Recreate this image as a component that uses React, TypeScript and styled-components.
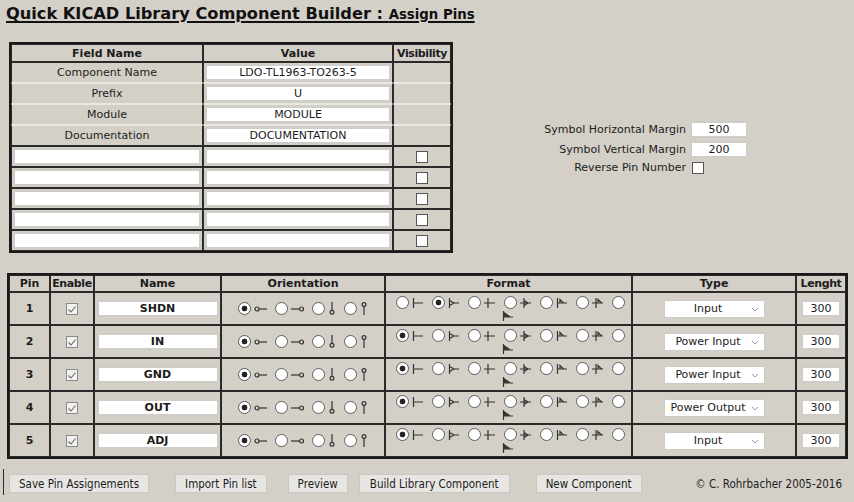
import React from 'react';
import styled, { createGlobalStyle } from 'styled-components';

const GlobalStyle = createGlobalStyle`
  html, body {
    margin: 0;
    padding: 0;
    background: #d4d0c8;
  }
  body {
    font-family: 'DejaVu Sans', Verdana, sans-serif;
    font-size: 11px;
    color: #1c1c1c;
  }
`;

const fields = [
  { name: 'Component Name', value: 'LDO-TL1963-TO263-5' },
  { name: 'Prefix', value: 'U' },
  { name: 'Module', value: 'MODULE' },
  { name: 'Documentation', value: 'DOCUMENTATION' },
];

const pins = [
  { pin: 1, name: 'SHDN', format: 1, type: 'Input' },
  { pin: 2, name: 'IN', format: 0, type: 'Power Input' },
  { pin: 3, name: 'GND', format: 0, type: 'Power Input' },
  { pin: 4, name: 'OUT', format: 0, type: 'Power Output' },
  { pin: 5, name: 'ADJ', format: 0, type: 'Input' },
];

const pinTypes = [
  'Input',
  'Output',
  'Bidirectional',
  'Tri-state',
  'Passive',
  'Unspecified',
  'Power Input',
  'Power Output',
  'Open Collector',
  'Open Emitter',
  'Not Connected',
];

const orientations = ['left', 'right', 'down', 'up'] as const;
const formats = ['line', 'clock', 'inverted', 'invclock', 'low', 'invlow'] as const;

type GlyphKind =
  | (typeof orientations)[number]
  | (typeof formats)[number]
  | 'flag';

// little pin drawings next to the radio buttons
const Glyph = ({ kind }: { kind: GlyphKind }) => {
  const s = { stroke: '#333', strokeWidth: 1.2, fill: 'none' };
  switch (kind) {
    case 'left':
      return (
        <svg width="13" height="12" viewBox="0 0 13 12">
          <circle cx="3" cy="6" r="2" {...s} />
          <path d="M5 6H13" {...s} />
        </svg>
      );
    case 'right':
      return (
        <svg width="13" height="12" viewBox="0 0 13 12">
          <path d="M0 6H8.5" {...s} />
          <circle cx="10.5" cy="6" r="2" {...s} />
        </svg>
      );
    case 'down':
      return (
        <svg width="8" height="13" viewBox="0 0 8 13">
          <path d="M4 0V8.3" {...s} />
          <circle cx="4" cy="10.3" r="1.9" {...s} />
        </svg>
      );
    case 'up':
      return (
        <svg width="8" height="13" viewBox="0 0 8 13">
          <circle cx="4" cy="2.5" r="1.9" {...s} />
          <path d="M4 4.5V13" {...s} />
        </svg>
      );
    case 'line':
      return (
        <svg width="11" height="12" viewBox="0 0 11 12">
          <path d="M1.5 1V11M1.5 6H11" {...s} />
        </svg>
      );
    case 'clock':
      return (
        <svg width="11" height="12" viewBox="0 0 11 12">
          <path d="M1.5 1V11M1.5 3.5L6 6L1.5 8.5M6 6H11" {...s} />
        </svg>
      );
    case 'inverted':
      return (
        <svg width="11" height="12" viewBox="0 0 11 12">
          <path d="M4 1V11M0 6H11" {...s} />
        </svg>
      );
    case 'invclock':
      return (
        <svg width="11" height="12" viewBox="0 0 11 12">
          <path d="M4 1V11M0 6H11M4 3.5L8 6L4 8.5" {...s} />
        </svg>
      );
    case 'low':
      return (
        <svg width="11" height="12" viewBox="0 0 11 12">
          <path d="M1.5 1V11M1.5 6H11M4 6V2.5L7.5 6" {...s} />
        </svg>
      );
    case 'invlow':
      return (
        <svg width="11" height="12" viewBox="0 0 11 12">
          <path d="M4 1V11M0 6H11M6 6V2.5L9.5 6" {...s} />
        </svg>
      );
    default:
      return (
        <svg width="11" height="10" viewBox="0 0 11 10">
          <path d="M1.5 0V10M1.5 6H11" {...s} />
          <path d="M1.5 1L8 5.5H1.5Z" fill="#333" stroke="#333" strokeWidth={0.8} />
        </svg>
      );
  }
};

const App = () => {
  return (
    <>
      <GlobalStyle />
      <Page>
        <Title>
          <TitleMain>Quick KICAD Library Component Builder : </TitleMain>
          <SubTitle>Assign Pins</SubTitle>
        </Title>

        <TopSection>
          <FieldTable>
            <colgroup>
              <col style={{ width: 192 }} />
              <col style={{ width: 190 }} />
              <col style={{ width: 58 }} />
            </colgroup>
            <thead>
              <HeadRow $h={18}>
                <HeadCell>Field Name</HeadCell>
                <HeadCell>Value</HeadCell>
                <HeadCell $tight>Visibility</HeadCell>
              </HeadRow>
            </thead>
            <tbody>
              {fields.map((f, i) => (
                <FieldRow key={f.name}>
                  <Cell $softTop={i > 0} $softBottom={i < fields.length - 1}>
                    {f.name}
                  </Cell>
                  <Cell $softTop={i > 0} $softBottom={i < fields.length - 1}>
                    <TextBox defaultValue={f.value} />
                  </Cell>
                  <Cell $softTop={i > 0} $softBottom={i < fields.length - 1} />
                </FieldRow>
              ))}
              {[0, 1, 2, 3, 4].map((i) => (
                <FieldRow key={i}>
                  <Cell>
                    <TextBox />
                  </Cell>
                  <Cell>
                    <TextBox />
                  </Cell>
                  <Cell>
                    <Check />
                  </Cell>
                </FieldRow>
              ))}
            </tbody>
          </FieldTable>

          <MarginPanel>
            <Label>Symbol Horizontal Margin</Label>
            <SmallBox defaultValue="500" />
            <Label>Symbol Vertical Margin</Label>
            <SmallBox defaultValue="200" />
            <Label>Reverse Pin Number</Label>
            <Check $inline />
          </MarginPanel>
        </TopSection>

        <PinTable>
          <colgroup>
            <col style={{ width: 41 }} />
            <col style={{ width: 44 }} />
            <col style={{ width: 127 }} />
            <col style={{ width: 164 }} />
            <col style={{ width: 247 }} />
            <col style={{ width: 164 }} />
            <col style={{ width: 50 }} />
          </colgroup>
          <thead>
            <HeadRow $h={17}>
              <HeadCell>Pin</HeadCell>
              <HeadCell $tight>Enable</HeadCell>
              <HeadCell>Name</HeadCell>
              <HeadCell>Orientation</HeadCell>
              <HeadCell>Format</HeadCell>
              <HeadCell>Type</HeadCell>
              <HeadCell $tight>Lenght</HeadCell>
            </HeadRow>
          </thead>
          <tbody>
            {pins.map((p) => (
              <PinRow key={p.pin}>
                <PinNumber>{p.pin}</PinNumber>
                <Cell>
                  <EnableBox>
                    <svg width="10" height="9" viewBox="0 0 10 9">
                      <path d="M1.5 4.5L4 7L8.5 1.5" stroke="#666" strokeWidth="1.1" fill="none" />
                    </svg>
                  </EnableBox>
                </Cell>
                <Cell>
                  <NameBox defaultValue={p.name} />
                </Cell>
                <Cell>
                  <Options $gap={8}>
                    {orientations.map((o, i) => (
                      <Option key={o}>
                        <Radio name={`orient-${p.pin}`} defaultChecked={i === 0} />
                        <Glyph kind={o} />
                      </Option>
                    ))}
                  </Options>
                </Cell>
                <Cell>
                  <FormatBlock>
                    <Options $gap={9}>
                      {formats.map((f, i) => (
                        <Option key={f}>
                          <Radio name={`format-${p.pin}`} defaultChecked={i === p.format} />
                          <Glyph kind={f} />
                        </Option>
                      ))}
                      <Radio name={`format-${p.pin}`} />
                    </Options>
                    <FlagLine>
                      <Glyph kind="flag" />
                    </FlagLine>
                  </FormatBlock>
                </Cell>
                <Cell>
                  <SelectWrap>
                    <TypeSelect defaultValue={p.type}>
                      {pinTypes.map((t) => (
                        <option key={t}>{t}</option>
                      ))}
                    </TypeSelect>
                    <Chevron>
                      <svg width="8" height="5" viewBox="0 0 8 5">
                        <path d="M1 1L4 4L7 1" stroke="#9a9a9a" strokeWidth="1" fill="none" />
                      </svg>
                    </Chevron>
                  </SelectWrap>
                </Cell>
                <Cell>
                  <LengthBox defaultValue="300" />
                </Cell>
              </PinRow>
            ))}
          </tbody>
        </PinTable>

        <Footer>
          <ActionButton $ml={5}>Save Pin Assignements</ActionButton>
          <ActionButton $ml={26}>Import Pin list</ActionButton>
          <ActionButton $ml={21}>Preview</ActionButton>
          <ActionButton $ml={11} $px={10}>Build Library Component</ActionButton>
          <ActionButton $ml={26}>New Component</ActionButton>
          <Copyright>© C. Rohrbacher 2005-2016</Copyright>
        </Footer>
      </Page>
    </>
  );
};

export default App;

const Page = styled.div`
  width: 854px;
  height: 502px;
  overflow: hidden;
  display: flex;
  flex-direction: column;
`;

const Title = styled.h1`
  display: flex;
  align-items: baseline;
  margin: 0;
  padding: 5px 0 0 6px;
  height: 18px;
  font-weight: bold;
  color: #111;
  text-decoration: underline;
  text-decoration-thickness: 2px;
  text-underline-offset: 2px;
  white-space: pre;
`;

const TitleMain = styled.span`
  font-size: 16.2px;
  line-height: 18px;
`;

const SubTitle = styled.span`
  font-size: 13.3px;
  line-height: 18px;
`;

const TopSection = styled.div`
  display: flex;
  align-items: center;
  margin-top: 19px;
`;

const Grid = styled.table`
  border-collapse: separate;
  border-spacing: 0;
  border: 2px solid #1a1a1a;
  table-layout: fixed;
`;

const FieldTable = styled(Grid)`
  margin-left: 9px;
  width: 444px;
`;

const PinTable = styled(Grid)`
  margin: 20px 0 0 7px;
  width: 841px;
`;

const HeadRow = styled.tr<{ $h: number }>`
  height: ${(p) => p.$h}px;
`;

const FieldRow = styled.tr`
  height: 21px;
`;

const PinRow = styled.tr`
  height: 33px;
`;

const HeadCell = styled.th<{ $tight?: boolean }>`
  border: 1px solid #2a2a2a;
  padding: 0;
  font-size: 11px;
  font-weight: bold;
  text-align: center;
  white-space: nowrap;
  letter-spacing: ${(p) => (p.$tight ? '-0.4px' : '0')};
`;

const Cell = styled.td<{ $softTop?: boolean; $softBottom?: boolean }>`
  border: 1px solid #2a2a2a;
  ${(p) => p.$softTop && 'border-top-color: #e9e7e2;'}
  ${(p) => p.$softBottom && 'border-bottom-color: #e9e7e2;'}
  padding: 0 1px;
  text-align: center;
  vertical-align: middle;
  white-space: nowrap;
`;

const PinNumber = styled(Cell)`
  font-weight: bold;
`;

const Input = styled.input`
  box-sizing: border-box;
  margin: 0;
  background: #fff;
  border: 2px solid #cfcdc8;
  font-family: 'DejaVu Sans', Verdana, sans-serif;
  font-size: 11px;
  color: #1c1c1c;
  text-align: center;
  outline: none;
  padding: 0 2px;
  vertical-align: middle;
`;

const TextBox = styled(Input)`
  width: 100%;
  height: 17px;
  display: block;
`;

const NameBox = styled(Input)`
  width: 122px;
  height: 17px;
  font-weight: bold;
`;

const LengthBox = styled(Input)`
  width: 40px;
  height: 17px;
`;

const SmallBox = styled(Input)`
  width: 58px;
  height: 17px;
`;

const Check = styled.span<{ $inline?: boolean }>`
  display: inline-block;
  box-sizing: border-box;
  width: 12px;
  height: 12px;
  border: 1px solid #555;
  background: #fff;
  vertical-align: middle;
  margin-left: ${(p) => (p.$inline ? '2px' : '0')};
`;

const EnableBox = styled.span`
  display: inline-flex;
  align-items: center;
  justify-content: center;
  box-sizing: border-box;
  width: 12px;
  height: 12px;
  border: 1px solid #8a8a8a;
  background: #f2f2f2;
  vertical-align: middle;
`;

const MarginPanel = styled.div`
  display: grid;
  grid-template-columns: 138px auto;
  column-gap: 4px;
  row-gap: 3px;
  align-items: center;
  margin-left: 95px;
`;

const Label = styled.span`
  justify-self: end;
  white-space: nowrap;
  font-size: 11px;
`;

const Options = styled.div<{ $gap: number }>`
  display: flex;
  justify-content: center;
  align-items: center;
  gap: ${(p) => p.$gap}px;
`;

const Option = styled.label`
  display: flex;
  align-items: center;
  gap: 3px;
`;

const Radio = styled.input.attrs({ type: 'radio' })`
  appearance: none;
  box-sizing: border-box;
  width: 13px;
  height: 13px;
  margin: 0;
  border: 1px solid #5c5c5c;
  border-radius: 50%;
  background: #fff;

  &:checked {
    background: radial-gradient(circle, #222 0 2.6px, #fff 3.2px);
  }
`;

const FormatBlock = styled.div`
  display: flex;
  flex-direction: column;
  align-items: center;
  gap: 2px;
  padding-left: 4px;
`;

const FlagLine = styled.div`
  display: flex;
  justify-content: center;
  padding-right: 6px;
`;

const SelectWrap = styled.div`
  position: relative;
  display: inline-block;
  vertical-align: middle;
`;

const TypeSelect = styled.select`
  appearance: none;
  box-sizing: border-box;
  width: 101px;
  height: 18px;
  margin: 0;
  padding: 0 14px 0 2px;
  border: 1px solid #cdcbc6;
  border-radius: 1px;
  background: #fff;
  font-family: 'DejaVu Sans', Verdana, sans-serif;
  font-size: 11px;
  color: #1c1c1c;
  text-align: center;
  text-align-last: center;
  outline: none;
`;

const Chevron = styled.span`
  position: absolute;
  right: 6px;
  top: 7px;
  display: flex;
  pointer-events: none;
`;

const Footer = styled.div`
  display: flex;
  align-items: center;
  margin: 10px 0 0 3px;
  padding-top: 3px;
  height: 26px;
  border-left: 1px solid #2a2a2a;
  width: 851px;
  box-sizing: border-box;
`;

const ActionButton = styled.button<{ $ml: number; $px?: number }>`
  margin: 0 0 0 ${(p) => p.$ml}px;
  height: 19px;
  padding: 0 ${(p) => p.$px ?? 9}px;
  border: 1px solid #c9c7c2;
  background: #e7e6e3;
  font-family: 'DejaVu Sans', sans-serif;
  font-stretch: condensed;
  font-size: 11.5px;
  color: #1c1c1c;
  white-space: nowrap;
  cursor: pointer;
`;

const Copyright = styled.span`
  margin-left: auto;
  margin-right: 12px;
  font-family: 'DejaVu Sans', sans-serif;
  font-stretch: condensed;
  font-size: 11.5px;
`;
